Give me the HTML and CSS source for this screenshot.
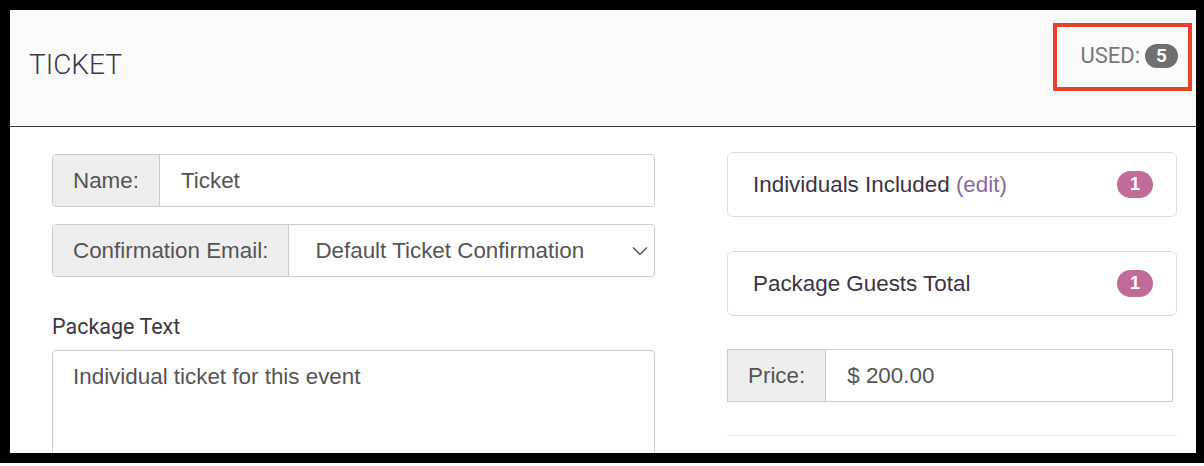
FILE: index.html
```html
<!DOCTYPE html>
<html>
<head>
<meta charset="utf-8">
<link rel="stylesheet" href="styles.css">
</head>
<body>
<div class="frame">
  <div class="header">
    <div class="title">TICKET</div>
    <div class="used">USED: <span class="used-badge">5</span></div>
  </div>
  <div class="highlight"></div>
  <div class="content">
    <div class="col-left">
      <div class="group">
        <div class="group-label">Name:</div>
        <div class="group-value">Ticket</div>
      </div>
      <div class="group group-gap">
        <div class="group-label">Confirmation Email:</div>
        <div class="group-value select">Default Ticket Confirmation
          <svg class="chev" width="16" height="10" viewBox="0 0 16 10"><polyline points="1,1.5 8,8.5 15,1.5" fill="none" stroke="#555" stroke-width="1.4"/></svg>
        </div>
      </div>
      <div class="field-label">Package Text</div>
      <div class="textarea">Individual ticket for this event</div>
    </div>
    <div class="col-right">
      <div class="card">
        <div>Individuals Included <span class="edit">(edit)</span></div>
        <span class="badge">1</span>
      </div>
      <div class="card card-gap">
        <div>Package Guests Total</div>
        <span class="badge">1</span>
      </div>
      <div class="group price">
        <div class="group-label">Price:</div>
        <div class="group-value">$ 200.00</div>
      </div>
      <div class="rule"></div>
    </div>
  </div>
</div>
</body>
</html>
```
FILE: styles.css
```css
html, body {
  margin: 0;
  padding: 0;
  background: #ffffff;
}
.frame {
  position: relative;
  border-style: solid;
  border-color: #000;
  border-width: 10px 8px 10px 10px;
  height: 443px;
  overflow: hidden;
  font-family: "Liberation Sans", Arial, sans-serif;
}
.header {
  height: 116px;
  background: #fafafa;
  border-bottom: 1px solid #3d3346;
  display: flex;
  justify-content: space-between;
  align-items: flex-start;
  padding: 0 18px 0 19px;
}
.title {
  font-family: Roboto, sans-serif;
  font-weight: 300;
  font-size: 28px;
  color: #3f3548;
  margin-top: 38px;
}
.used {
  font-family: Roboto, sans-serif;
  font-size: 22px;
  color: #777;
  margin-top: 33px;
  display: flex;
  align-items: center;
  gap: 5px;
}
.used-badge {
  display: inline-flex;
  align-items: center;
  justify-content: center;
  width: 33px;
  height: 24px;
  border-radius: 12px;
  background: #6f6f6f;
  color: #fff;
  font-weight: 700;
  font-size: 19px;
}
.highlight {
  position: absolute;
  left: 1043px;
  top: 13px;
  width: 139px;
  height: 68px;
  box-sizing: border-box;
  border: 4px solid #e8412c;
}
.content {
  display: flex;
  gap: 72px;
  padding: 27px 0 0 42px;
}
.col-left {
  width: 603px;
}
.col-right {
  width: 450px;
  margin-top: -2px;
}
.group {
  display: flex;
  height: 53px;
  box-sizing: border-box;
  border: 1px solid #ccc;
  border-radius: 4px;
  font-size: 22.4px;
  color: #555;
}
.group-gap {
  margin-top: 17px;
}
.group-label {
  display: flex;
  align-items: center;
  padding: 0 20px;
  background: #eeeeee;
  border-right: 1px solid #ccc;
  border-radius: 3px 0 0 3px;
}
.group-value {
  flex: 1;
  display: flex;
  align-items: center;
  padding-left: 21px;
  background: #fff;
  border-radius: 0 4px 4px 0;
}
.select {
  padding-left: 26px;
  justify-content: space-between;
  padding-right: 6px;
}
.chev {
  display: block;
}
.field-label {
  font-family: Roboto, sans-serif;
  font-size: 21.5px;
  color: #3f3548;
  margin-top: 37px;
}
.textarea {
  margin-top: 11px;
  height: 140px;
  box-sizing: border-box;
  border: 1px solid #ccc;
  border-radius: 4px;
  padding: 13px 20px;
  font-size: 22.4px;
  color: #555;
}
.card {
  height: 65px;
  box-sizing: border-box;
  border: 1px solid #ddd;
  border-radius: 6px;
  display: flex;
  align-items: center;
  justify-content: space-between;
  padding: 0 23px 0 25px;
  font-size: 22.4px;
  color: #3d3346;
}
.card-gap {
  margin-top: 34px;
}
.edit {
  color: #8c68a0;
}
.badge {
  display: inline-flex;
  align-items: center;
  justify-content: center;
  width: 36px;
  height: 27px;
  border-radius: 14px;
  background: #c06b98;
  color: #fff;
  font-weight: 700;
  font-size: 18px;
}
.price {
  margin-top: 33px;
  width: 446px;
  border-radius: 0;
}
.price .group-label, .price .group-value {
  border-radius: 0;
}
.rule {
  margin-top: 33px;
  height: 1px;
  background: #eee;
}
```
